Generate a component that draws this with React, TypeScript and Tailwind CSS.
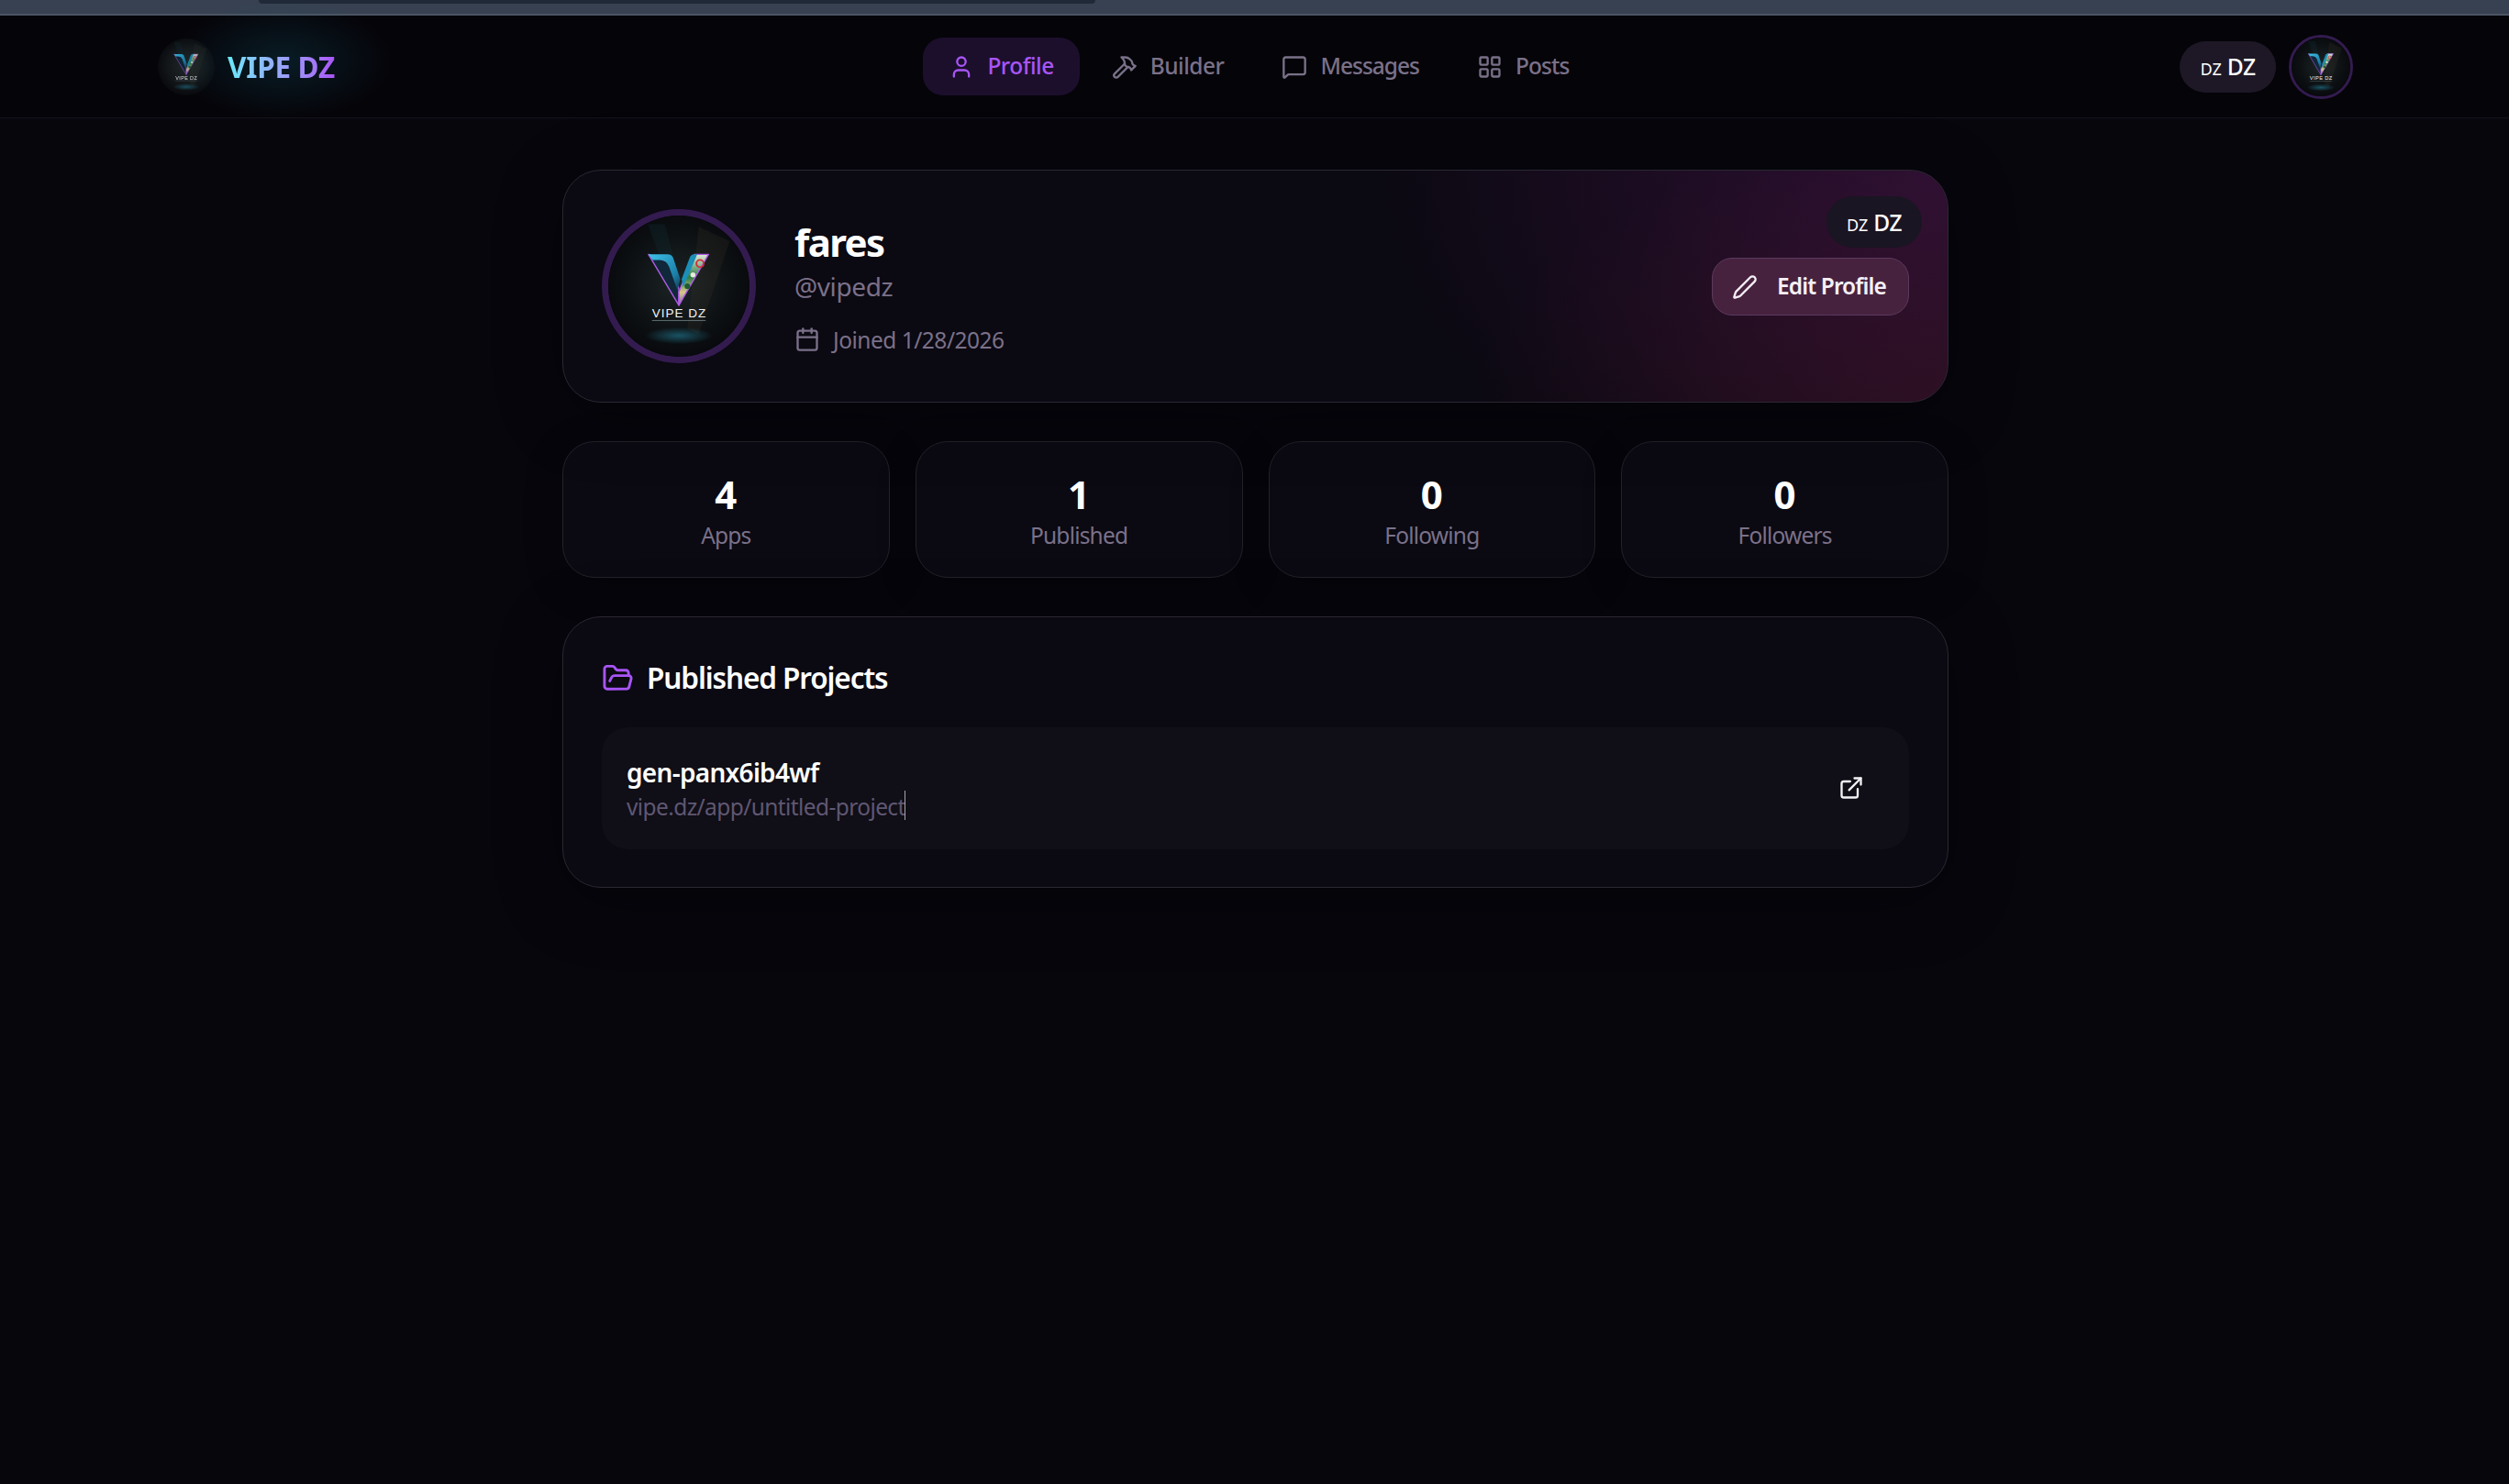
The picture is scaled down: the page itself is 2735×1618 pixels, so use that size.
import { useId } from "react";
import { User, Hammer, MessageSquare, LayoutGrid, Calendar, Pen, FolderOpen, ExternalLink } from "lucide-react";

function Logo({ dim = false }: { dim?: boolean }) {
  const id = useId().replace(/:/g, "");
  return (
    <svg viewBox="0 0 100 100" className="w-full h-full block rounded-full">
      <defs>
        <radialGradient id={id + "bg"} cx="50%" cy="48%" r="55%">
          <stop offset="0%" stopColor={dim ? "#232a2b" : "#1d2526"} />
          <stop offset="60%" stopColor={dim ? "#15191b" : "#0e1214"} />
          <stop offset="100%" stopColor="#07080c" />
        </radialGradient>
        <radialGradient id={id + "glow"} cx="50%" cy="50%" r="50%">
          <stop offset="0%" stopColor="#1f6f86" stopOpacity="0.7" />
          <stop offset="100%" stopColor="#1f6f86" stopOpacity="0" />
        </radialGradient>
        <linearGradient id={id + "cy"} x1="0" y1="0" x2="1" y2="1">
          <stop offset="0%" stopColor="#3fc4ea" />
          <stop offset="70%" stopColor="#1b7fa8" />
          <stop offset="100%" stopColor="#10364a" />
        </linearGradient>
        <linearGradient id={id + "pat"} x1="0" y1="0" x2="0" y2="1">
          <stop offset="0%" stopColor="#dfe8d8" />
          <stop offset="45%" stopColor="#2f7d45" />
          <stop offset="75%" stopColor="#d8c98a" />
          <stop offset="100%" stopColor="#7a5cc0" />
        </linearGradient>
      </defs>
      <rect width="100" height="100" fill={`url(#${id}bg)`} />
      <polygon points="28,6 40,6 52,50 44,50" fill="#123035" opacity="0.3" />
      <polygon points="64,8 86,18 64,84 56,80" fill="#3a3528" opacity="0.22" />
      <ellipse cx="50" cy="85" rx="24" ry="6" fill={`url(#${id}glow)`} />
      <polygon points="28.5,27.5 50,63.5 50,52 43,33" fill="#10283a" stroke="#b05ce6" strokeWidth="0.9" strokeLinejoin="round" />
      <polygon points="71,27.5 50,63.5 50,54 61,27.5" fill={`url(#${id}pat)`} stroke="#b05ce6" strokeWidth="0.9" strokeLinejoin="round" />
      <path d="M28.5 27.5 L42 27.5 Q45 27.5 46 30 L51 45 L49 53 L43 36 Q41 31.5 37 31.5 L31.5 31.5 Z" fill={`url(#${id}cy)`} />
      <path d="M52 45 L58 29 Q59 27.5 61 27.5 L63 27.5 L53 51 Z" fill="#1b8fb8" />
      <circle cx="65" cy="34" r="2.6" fill="none" stroke="#d02c3c" strokeWidth="1.2" />
      <circle cx="56" cy="50" r="2" fill="#1d5c30" />
      <circle cx="60" cy="42" r="1.8" fill="#e6ecdc" />
      <text x="31" y="72" textLength="38" fontSize="8.8" fontFamily="'Liberation Sans', sans-serif" fill="#f1f3f5">VIPE DZ</text>
      <rect x="31" y="74" width="38" height="0.4" fill="#8fa6ad" />
    </svg>
  );
}

function Flag() {
  return (
    <span className="flex items-baseline gap-[6px] text-white pt-[2px]">
      <span className="text-[18px] leading-none">DZ</span>
      <span className="text-[24.5px] leading-none font-medium tracking-[-0.5px]">DZ</span>
    </span>
  );
}

const nav = [
  { label: "Profile", Icon: User, active: true, track: "tracking-[-0.5px]" },
  { label: "Builder", Icon: Hammer, active: false, track: "tracking-[-0.5px]" },
  { label: "Messages", Icon: MessageSquare, active: false, track: "tracking-[-1px]" },
  { label: "Posts", Icon: LayoutGrid, active: false, track: "tracking-[-0.9px]" },
];

const stats = [
  ["4", "Apps"],
  ["1", "Published"],
  ["0", "Following"],
  ["0", "Followers"],
];

export default function App() {
  return (
    <div className="min-h-[1618px] bg-[#07060d] font-['Noto_Sans',sans-serif] text-white overflow-hidden">
      <div className="h-[17px] bg-[#374151] border-b-2 border-[#4b5563]">
        <div className="ml-[282px] w-[912px] h-[4px] bg-[#1f2937] rounded-b-[10px]" />
      </div>

      <header className="relative h-[112px] border-b border-[#15121b] bg-[#050409] pl-[172px] pr-[170px] flex items-center justify-between">
        <div className="flex items-center gap-[14px] mr-[4px]">
          <div className="w-[62px] h-[62px] opacity-90">
            <Logo dim />
          </div>
          <div className="relative">
            <div className="absolute -left-[60px] -top-[50px] w-[240px] h-[130px] bg-[radial-gradient(closest-side,rgba(20,90,110,0.28),rgba(20,90,110,0))]" />
            <span className="relative text-[31.5px] leading-[44px] font-bold tracking-[-0.3px] bg-gradient-to-r from-[#67e8f9] to-[#a855f7] bg-clip-text text-transparent">
              VIPE DZ
            </span>
          </div>
        </div>

        <nav className="flex items-center gap-[7px]">
          {nav.map(({ label, Icon, active, track }) => (
            <div
              key={label}
              className={`h-[63px] px-[28px] rounded-[22px] flex items-center gap-[14px] text-[24.5px] font-medium ${track} ${
                active ? "bg-[#1c0f2c] text-[#a855f7]" : "text-[#7a7189]"
              }`}
            >
              <Icon size={28} strokeWidth={2} />
              <span>{label}</span>
            </div>
          ))}
        </nav>

        <div className="flex items-center gap-[14px]">
          <div className="h-[56px] w-[105px] rounded-full bg-[#1e1826] flex items-center justify-center">
            <Flag />
          </div>
          <div className="w-[70px] h-[70px] rounded-full border-[3px] border-[#331b4f] overflow-hidden">
            <Logo />
          </div>
        </div>
      </header>

      <main className="w-[1511px] ml-[613px] pt-[56px] flex flex-col gap-[42px]">
        <section className="relative h-[254px] rounded-[42px] border border-[#2b2733] bg-[#0b0912] shadow-[0_14px_70px_rgba(0,0,0,0.45)] overflow-hidden p-[42px] flex items-center justify-between">
          <div className="absolute inset-0 bg-[radial-gradient(ellipse_620px_420px_at_100%_0%,rgba(120,30,120,0.32),rgba(120,30,120,0)),radial-gradient(ellipse_520px_280px_at_100%_100%,rgba(130,30,40,0.2),rgba(130,30,40,0))]" />
          <div className="relative flex items-center gap-[42px]">
            <div className="w-[168px] h-[168px] rounded-full border-[7px] border-[#331b4f] overflow-hidden">
              <Logo />
            </div>
            <div className="flex flex-col -mt-[1px]">
              <h1 className="text-[42px] leading-[56px] font-bold tracking-[-1.6px]">fares</h1>
              <p className="text-[28px] leading-[38px] mt-[1px] text-[#7a7189] tracking-[-0.4px]">@vipedz</p>
              <div className="mt-[22px] flex items-center gap-[14px] text-[24.5px] leading-[35px] text-[#7a7189] tracking-[-0.5px]">
                <Calendar size={28} strokeWidth={2} />
                <span>Joined 1/28/2026</span>
              </div>
            </div>
          </div>
          <button className="relative mt-[1px] h-[63px] w-[215px] pr-[3px] rounded-[22px] border border-[#5a3a5c] bg-[#47223f] flex items-center justify-center gap-[21px] text-[24.5px] font-semibold tracking-[-0.9px] text-[#f5f0f5]">
            <Pen size={28} strokeWidth={2} />
            <span>Edit Profile</span>
          </button>
          <div className="absolute right-[28px] top-[28px] h-[56px] w-[104px] rounded-full bg-[#1a1522] flex items-center justify-center">
            <Flag />
          </div>
        </section>

        <section className="grid grid-cols-4 gap-[28px]">
          {stats.map(([n, l]) => (
            <div
              key={l}
              className="h-[149px] pt-[1px] rounded-[35px] border border-[#24212b] bg-[#0b0912] shadow-[0_10px_40px_rgba(0,0,0,0.3)] flex flex-col items-center justify-center"
            >
              <div className="text-[42px] leading-[54px] font-bold">{n}</div>
              <div className="text-[24.5px] leading-[35px] text-[#7a7189] tracking-[-0.8px]">{l}</div>
            </div>
          ))}
        </section>

        <section className="rounded-[42px] border border-[#2b2733] bg-[#0b0912] shadow-[0_14px_70px_rgba(0,0,0,0.45)] h-[296px] p-[42px] pt-[41px]">
          <div className="flex items-center gap-[14px] h-[50px]">
            <FolderOpen size={35} strokeWidth={2} className="text-[#a855f7]" />
            <h2 className="text-[31.5px] font-semibold tracking-[-1.1px] leading-[44px]">Published Projects</h2>
          </div>
          <div className="mt-[29px] h-[133px] rounded-[28px] bg-[#100e16] pl-[27px] pr-[49px] flex items-center justify-between">
            <div>
              <div className="text-[28px] leading-[38px] font-semibold tracking-[-0.7px]">gen-panx6ib4wf</div>
              <div className="relative w-fit text-[24.5px] leading-[35px] mt-[1px] text-[#5f5773] tracking-[-0.6px]">
                vipe.dz/app/untitled-project
                <span className="absolute right-0 top-0 w-px h-[32px] bg-[#a8a4b0]" />
              </div>
            </div>
            <ExternalLink size={28} strokeWidth={2} className="text-[#f3f3f6] -mt-[2px]" />
          </div>
        </section>
      </main>
    </div>
  );
}
